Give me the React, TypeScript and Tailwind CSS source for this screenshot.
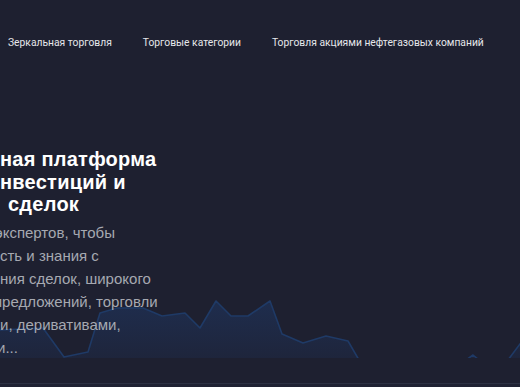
import React from "react";

type Line = { hidden: string; shown: string; w: string };

const titleLines: Line[] = [
  { hidden: "Ваша социаль", shown: "ная платформа", w: "w-[160px]" },
  { hidden: "для частных и", shown: "нвестиций и", w: "w-[160px]" },
  { hidden: "копирования\u00a0\u00a0", shown: "сделок", w: "w-[168px]" },
];

const paraLines: Line[] = [
  { hidden: "Присоединяйтесь к тысячам\u00a0", shown: "экспертов, чтобы", w: "w-[155px]" },
  { hidden: "перенимать их опытно", shown: "сть и знания с", w: "w-[160px]" },
  { hidden: "помощью копирова", shown: "ния сделок, широкого", w: "w-[160px]" },
  { hidden: "спектра финансовых\u00a0", shown: "предложений, торговли", w: "w-[154px]" },
  { hidden: "облигациями, акциям", shown: "и, деривативами,", w: "w-[160px]" },
  { hidden: "и сырьевыми товарам", shown: "и...", w: "w-[157px]" },
];

const pts: [number, number][] = [
  [-10, 41], [0, 40], [43, 38], [64, 67], [88, 62], [100, 23], [117, 18], [143, 18],
  [162, 26], [185, 23], [200, 38], [216, 11], [231, 26], [248, 26], [270, 11],
  [282, 44], [303, 53], [326, 46], [348, 51], [359, 70], [466, 70], [473, 65],
  [479, 70], [508, 70], [520, 54], [530, 48],
];

function Chart() {
  const line = pts.map((p, i) => `${i ? "L" : "M"}${p[0]} ${p[1]}`).join(" ");
  const area = `${line} L530 80 L-10 80 Z`;
  return (
    <svg
      className="absolute left-0 top-[204px]"
      width={520}
      height={68}
      viewBox="0 0 520 68"
    >
      <defs>
        <linearGradient id="g" x1="0" y1="0" x2="0" y2="1">
          <stop offset="0%" stopColor="#1f3d72" stopOpacity="0.45" />
          <stop offset="100%" stopColor="#1f3d72" stopOpacity="0.12" />
        </linearGradient>
      </defs>
      <path d={area} fill="url(#g)" />
      <path d={line} fill="none" stroke="#1f3a66" strokeWidth="1.6" strokeLinejoin="round" />
    </svg>
  );
}

function Row({ l }: { l: Line }) {
  return (
    <div className="flex">
      <span className={`${l.w} shrink-0 flex justify-end overflow-hidden`}>{l.hidden}</span>
      <span>{l.shown}</span>
    </div>
  );
}

export default function App() {
  return (
    <div className="w-[520px] h-[387px] overflow-hidden bg-[#1e2030] flex flex-col">
      <nav
        className="h-[86px] flex items-center pl-2 gap-[31px] text-[10.3px] text-[#e6e7eb] shrink-0 whitespace-nowrap"
        style={{ fontFamily: "Roboto, 'Noto Sans', sans-serif" }}
      >
        <span>Зеркальная торговля</span>
        <span>Торговые категории</span>
        <span>Торговля акциями нефтегазовых компаний</span>
      </nav>
      <section className="relative flex-1">
        <Chart />
        <div
          className="relative ml-[-160px] pt-[62px] whitespace-nowrap"
          style={{ fontFamily: "'Liberation Sans', Arial, sans-serif" }}
        >
          <h1 className="text-[20px] leading-[22.5px] font-bold tracking-[0.25px] text-white">
            {titleLines.map((l) => (
              <Row key={l.shown} l={l} />
            ))}
          </h1>
          <div className="mt-[5px] text-[15px] leading-[23px] text-[#a6a9b1]">
            {paraLines.map((l) => (
              <Row key={l.shown} l={l} />
            ))}
          </div>
        </div>
      </section>
      <div className="h-[4px] border-t border-[#2c3143] bg-[#1f2233] shrink-0" />
    </div>
  );
}
